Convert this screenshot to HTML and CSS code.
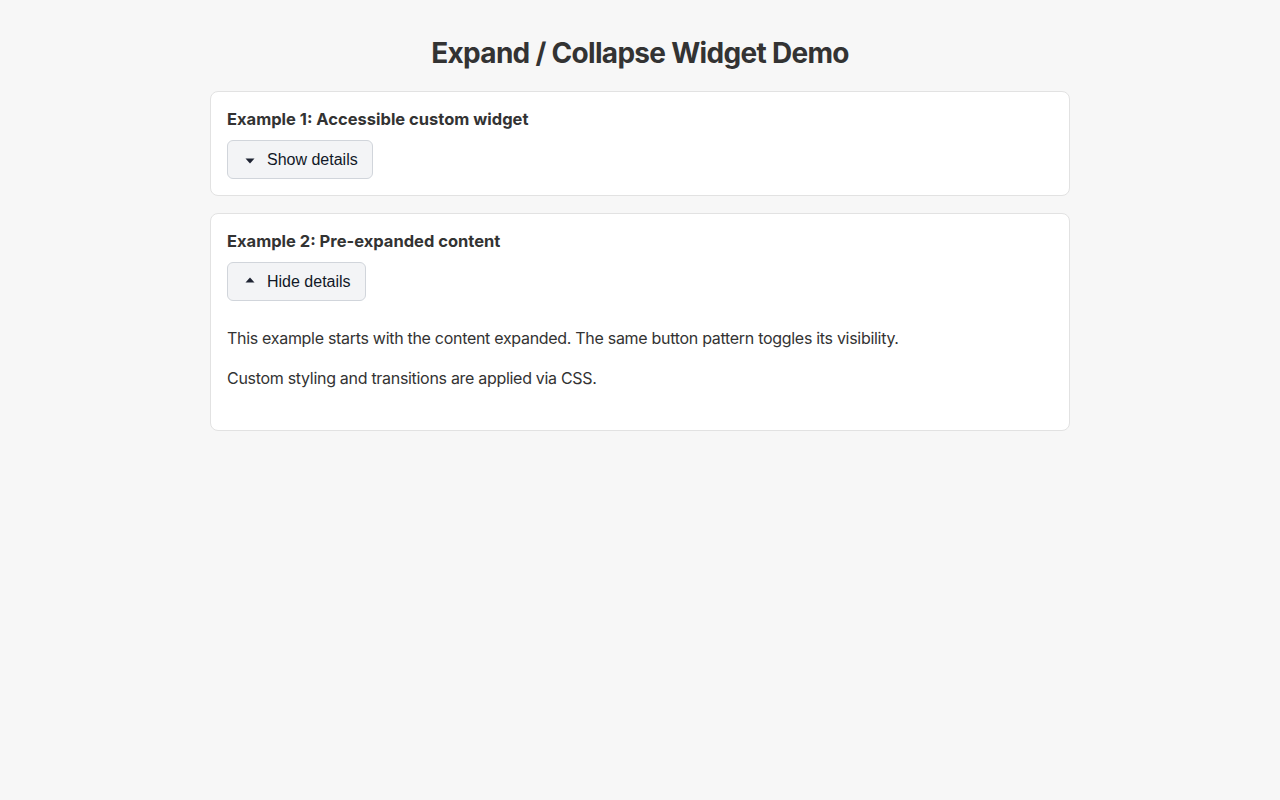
FILE: index.html
```html
<!DOCTYPE html>
<html lang="en">
<head>
    <meta charset="UTF-8">
    <title>Expand / Collapse Widget Demo</title>
    <link rel="stylesheet" href="styles.css">
</head>
<body>
<div id="content">
    <h1>Expand / Collapse Widget Demo</h1>

    <div class="card">
        <h2>Example 1: Accessible custom widget</h2>
        <button class="toggle" aria-expanded="false" aria-controls="details1">
            <svg class="arrow arrow-down" width="10" height="6" viewBox="0 0 10 6"><path d="M0.5 0.5 L9.5 0.5 L5 5.5 Z" fill="#1f2433"/></svg>Show details
        </button>
        <div class="details" id="details1" hidden>
            <p>This content is hidden until the button is pressed.</p>
        </div>
    </div>

    <div class="card">
        <h2>Example 2: Pre-expanded content</h2>
        <button class="toggle" aria-expanded="true" aria-controls="details2">
            <svg class="arrow arrow-up" width="10" height="6" viewBox="0 0 10 6"><path d="M0.5 5.5 L9.5 5.5 L5 0.5 Z" fill="#1f2433"/></svg>Hide details
        </button>
        <div class="details" id="details2">
            <p>This example starts with the content expanded. The same button pattern toggles its visibility.</p>
            <p>Custom styling and transitions are applied via CSS.</p>
        </div>
    </div>
</div>
</body>
</html>
```

FILE: styles.css
```css
html,body,h1,h2,p,div{
    margin: 0;
    padding: 0;
}
body{
    background-color: #f7f7f7;
    color: #333333;
    font-family: Inter, "Noto Sans", sans-serif;
    font-size: 16px;
    line-height: 1.5;
    letter-spacing: -0.3px;
}
#content{
    width: 860px;
    margin: 0 auto;
    padding-top: 35px;
}
h1{
    font-size: 28px;
    font-weight: 700;
    text-align: center;
    line-height: 36px;
    letter-spacing: -0.7px;
    margin-bottom: 20px;
}
.card{
    background-color: #ffffff;
    border: 1px solid #e2e2e2;
    border-radius: 8px;
    padding: 16px;
    margin-bottom: 17px;
}
h2{
    font-size: 16.5px;
    font-weight: 700;
    line-height: 22px;
    letter-spacing: 0;
    margin-bottom: 10px;
}
.toggle{
    font-family: "Liberation Sans", Arial, sans-serif;
    font-size: 16px;
    letter-spacing: 0;
    color: #111827;
    background-color: #f3f4f6;
    border: 1px solid #d1d5db;
    border-radius: 6px;
    height: 39px;
    padding: 0 14px 0 17px;
    cursor: pointer;
    display: flex;
    align-items: center;
}
.arrow{
    margin-right: 12px;
}
.arrow-down{
    margin-top: 3px;
}
.arrow-up{
    margin-top: -4px;
}
.details{
    padding: 9px 0 8px;
}
.details p{
    margin-top: 16px;
    margin-bottom: 0;
}
.details p:last-child{
    margin-bottom: 16px;
}
```
